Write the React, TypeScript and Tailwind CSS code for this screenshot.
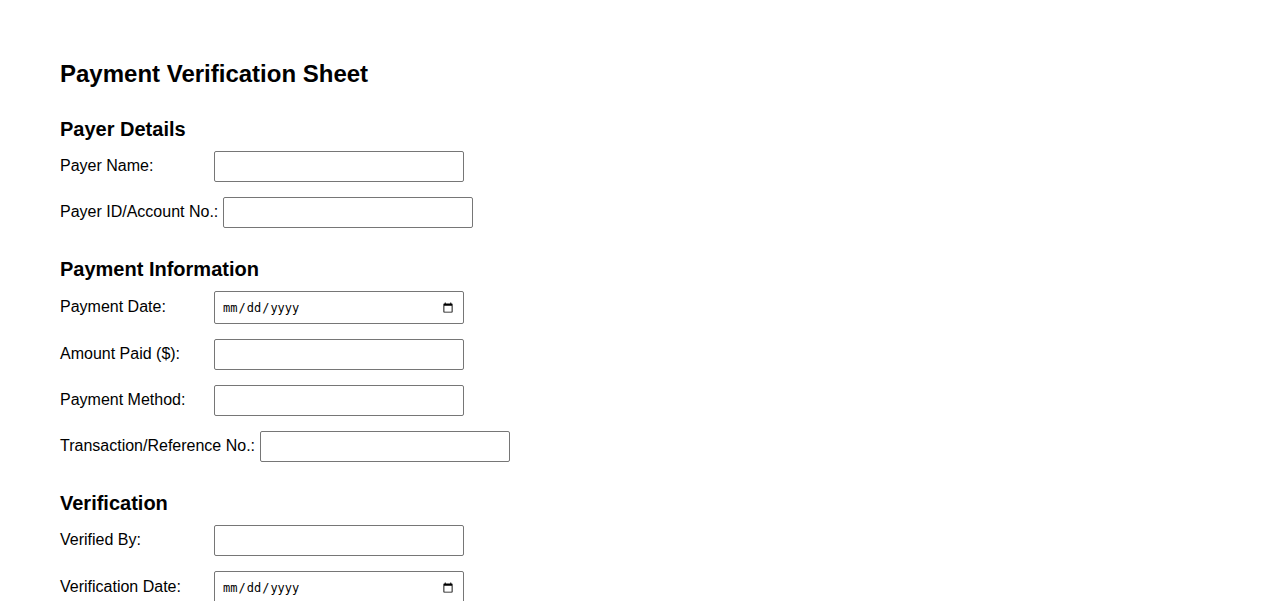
const sections = [
  {
    title: "Payer Details",
    fields: [
      { label: "Payer Name:", type: "text" },
      { label: "Payer ID/Account No.:", type: "text" },
    ],
  },
  {
    title: "Payment Information",
    fields: [
      { label: "Payment Date:", type: "date" },
      { label: "Amount Paid ($):", type: "text" },
      { label: "Payment Method:", type: "text" },
      { label: "Transaction/Reference No.:", type: "text" },
    ],
  },
  {
    title: "Verification",
    fields: [
      { label: "Verified By:", type: "text" },
      { label: "Verification Date:", type: "date" },
    ],
  },
]

function Field({ label, type }: { label: string; type: string }) {
  return (
    <div className="flex items-center gap-[4.5px] mb-[15px]">
      <label className="min-w-[149.5px] text-[16px] leading-[18px] -mt-[2px]">{label}</label>
      {type === "date" ? (
        <input
          type="date"
          className="w-[250px] h-[33px] px-[7px] border border-[#767676] rounded-[2px] bg-white font-['DejaVu_Sans_Mono',monospace] text-[12px] text-black"
        />
      ) : (
        <input
          type="text"
          className="w-[250px] h-[31px] px-[5px] border border-[#767676] rounded-[2px] bg-white text-[16px]"
        />
      )}
    </div>
  )
}

export default function App() {
  return (
    <div className="min-h-screen bg-white text-black pl-[60px] pt-[60px] font-['Liberation_Sans',Arial,sans-serif]">
      <h1 className="text-[24px] leading-[28px] font-bold">Payment Verification Sheet</h1>
      {sections.map((s) => (
        <section key={s.title} className="mt-[30px]">
          <h2 className="text-[20px] leading-[23px] font-bold mb-[10px]">{s.title}</h2>
          {s.fields.map((f) => (
            <Field key={f.label} label={f.label} type={f.type} />
          ))}
        </section>
      ))}
    </div>
  )
}
